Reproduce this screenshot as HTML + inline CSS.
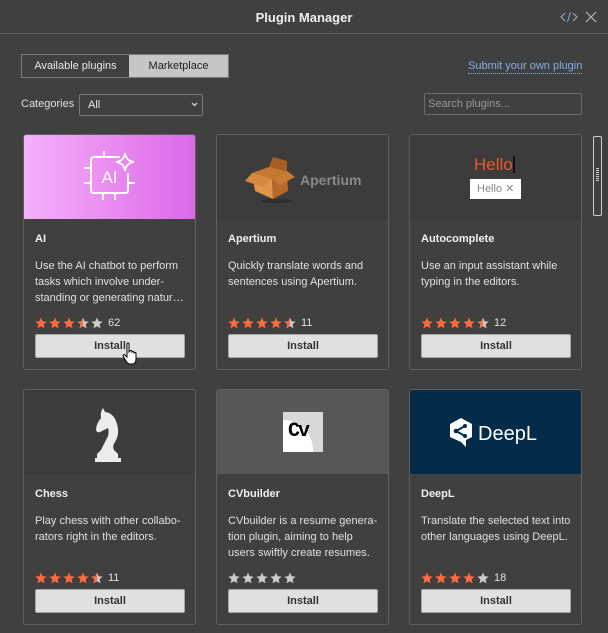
<!DOCTYPE html>
<html><head><meta charset="utf-8"><style>
*{margin:0;padding:0;box-sizing:border-box}
body{width:608px;height:633px;background:#404040;font-family:"Liberation Sans",sans-serif;color:#e6e6e6;position:relative;overflow:hidden;font-size:11px}
.abs{position:absolute}
.title{left:0;top:0;width:608px;height:34px;border-bottom:1px solid #5c5c5c;text-align:center;line-height:36px;font-weight:bold;font-size:13px;color:#f0f0f0}
.card{position:absolute;width:173px;height:236px;border:1px solid #606060;border-radius:3px;overflow:hidden;background:#404040}
.img{position:absolute;left:0;top:0;width:171px;height:84px;background:#3c3c3c}
.name{position:absolute;left:11px;top:98px;font-weight:bold;font-size:11px;color:#f0f0f0}
.desc{position:absolute;left:11px;top:123px;width:160px;line-height:16px;font-size:11px;color:#e0e0e0;white-space:nowrap}
.stars{position:absolute;left:11px;top:181px;height:13px;display:flex;align-items:center}
.stars svg{width:12px;height:12px;margin-right:2px}
.stars span{margin-left:3px;font-size:11px;color:#e0e0e0}
.btn{position:absolute;left:11px;top:199px;width:150px;height:24px;background:#e0e0e0;border:1px solid #a8a8a8;border-radius:2px;text-align:center;line-height:22px;font-weight:bold;font-size:11px;color:#333}
</style></head><body>
<svg width="0" height="0" style="position:absolute"><defs>
<path id="st" d="M6 0.5L7.6 4.3L11.7 4.6L8.6 7.3L9.5 11.3L6 9.2L2.5 11.3L3.4 7.3L0.3 4.6L4.4 4.3Z"/>
<clipPath id="half"><rect x="0" y="0" width="6" height="12"/></clipPath>
</defs></svg>

<div class="abs title">Plugin Manager</div>
<svg class="abs" style="left:560px;top:11px" width="18" height="12" viewBox="0 0 18 12"><path d="M5 2L1 6L5 10M13 2L17 6L13 10" stroke="#a8a8a8" fill="none" stroke-width="1.1"/><path d="M10.5 1L7.5 11" stroke="#7aa0d8" stroke-width="1.1"/></svg>
<svg class="abs" style="left:585px;top:11px" width="12" height="12" viewBox="0 0 12 12"><path d="M1 1L11 11M11 1L1 11" stroke="#b8b8b8" stroke-width="1.2"/></svg>

<div class="abs" style="left:21px;top:54px;width:208px;height:24px;border:1px solid #7a7a7a;"></div>
<div class="abs" style="left:22px;top:55px;width:107px;height:22px;line-height:22px;text-align:center;color:#e8e8e8">Available plugins</div>
<div class="abs" style="left:129px;top:55px;width:99px;height:22px;line-height:22px;text-align:center;background:#c6c6c6;color:#222">Marketplace</div>
<div class="abs" style="left:468px;top:60px;color:#86aee8;border-bottom:1px dotted #86aee8;line-height:13px">Submit your own plugin</div>

<div class="abs" style="left:21px;top:98px;color:#e0e0e0">Categories</div>
<div class="abs" style="left:79px;top:94px;width:124px;height:22px;border:1px solid #777;border-radius:2px;padding-left:8px;line-height:20px;color:#e8e8e8">All</div>
<svg class="abs" style="left:191px;top:102px" width="7" height="5"><path d="M1 1L3.5 3.5L6 1" stroke="#ddd" fill="none" stroke-width="1.2"/></svg>
<div class="abs" style="left:424px;top:93px;width:158px;height:22px;border:1px solid #6c6c6c;border-radius:2px;padding-left:3px;line-height:20px;color:#999">Search plugins...</div>

<div class="abs" style="left:593px;top:136px;width:9px;height:80px;border:1px solid #cfcfcf;border-radius:2px"></div>
<div class="abs" style="left:596px;top:168px;width:3px;height:14px;background:repeating-linear-gradient(#ccc 0 1px,transparent 1px 2px)"></div>

<!-- AI -->
<div class="card" style="left:23px;top:134px">
<div class="img" style="background:linear-gradient(90deg,#f6b0fb,#dc68e8)">
<svg width="171" height="84"><g stroke="#fff" stroke-width="2" fill="none">
<path d="M96 22H70Q67 22 67 25V55Q67 58 70 58H101Q104 58 104 55V38"/>
<path d="M80 22V16M79 58V65M91 58V65M67 33H60M67 48H60M104 48H111"/>
<path d="M101 18Q102 26 110 27Q102 28 101 36Q100 28 92 27Q100 26 101 18Z" stroke-width="1.8"/>
</g><text x="85.5" y="48" text-anchor="middle" fill="#fff" font-size="17" font-family="Liberation Sans">AI</text></svg>
</div>
<div class="name">AI</div>
<div class="desc">Use the AI chatbot to perform<br>tasks which involve under-<br>standing or generating natur…</div>
<div class="stars"><svg><use href="#st" fill="#ff6b3d"/></svg><svg><use href="#st" fill="#ff6b3d"/></svg><svg><use href="#st" fill="#ff6b3d"/></svg><svg><use href="#st" fill="#ccc"/><use href="#st" fill="#ff6b3d" clip-path="url(#half)"/></svg><svg><use href="#st" fill="#ccc"/></svg><span>62</span></div>
<div class="btn">Install</div>
</div>

<!-- Apertium -->
<div class="card" style="left:216px;top:134px">
<div class="img">
<svg width="171" height="84"><path d="M35 38L52 32L70 36L55 44Z" fill="#c4792e"/><path d="M35 38L55 44L56 64L38 56Z" fill="#e0954a"/><path d="M55 44L70 36L71 56L56 64Z" fill="#b8682a"/><path d="M35 38L28 46L46 52L55 44Z" fill="#d6893c"/><path d="M70 36L78 42L63 50L55 44Z" fill="#c97a35"/><path d="M52 32L56 22L70 26L70 36Z" fill="#a85e24"/><ellipse cx="60" cy="66" rx="16" ry="2" fill="#2e2e2e"/>
<text x="83" y="50" fill="#8a8a8a" font-size="14" font-weight="bold" font-family="Liberation Sans">Apertium</text></svg>
</div>
<div class="name">Apertium</div>
<div class="desc">Quickly translate words and<br>sentences using Apertium.</div>
<div class="stars"><svg><use href="#st" fill="#ff6b3d"/></svg><svg><use href="#st" fill="#ff6b3d"/></svg><svg><use href="#st" fill="#ff6b3d"/></svg><svg><use href="#st" fill="#ff6b3d"/></svg><svg><use href="#st" fill="#ccc"/><use href="#st" fill="#ff6b3d" clip-path="url(#half)"/></svg><span>11</span></div>
<div class="btn">Install</div>
</div>

<!-- Autocomplete -->
<div class="card" style="left:409px;top:134px">
<div class="img">
<div class="abs" style="left:64px;top:20px;font-size:17px;color:#f0562c">Hello</div>
<div class="abs" style="left:103px;top:21px;width:2px;height:17px;background:#111"></div>
<div class="abs" style="left:60px;top:44px;width:51px;height:20px;background:#fff;color:#888;font-size:11px;line-height:20px;padding-left:7px">Hello ✕</div>
</div>
<div class="name">Autocomplete</div>
<div class="desc">Use an input assistant while<br>typing in the editors.</div>
<div class="stars"><svg><use href="#st" fill="#ff6b3d"/></svg><svg><use href="#st" fill="#ff6b3d"/></svg><svg><use href="#st" fill="#ff6b3d"/></svg><svg><use href="#st" fill="#ff6b3d"/></svg><svg><use href="#st" fill="#ccc"/><use href="#st" fill="#ff6b3d" clip-path="url(#half)"/></svg><span>12</span></div>
<div class="btn">Install</div>
</div>

<!-- Chess -->
<div class="card" style="left:23px;top:389px">
<div class="img">
<svg width="171" height="84"><path d="M79 18L81 22Q90 23 93 34Q96 44 91 52Q88 56 90 60L94 64L94 68L73 68L73 64L77 60Q79 56 82 50Q86 44 84 38Q80 40 76 42Q73 43 72 40Q72 34 77 28Q76 22 79 18Z" fill="#ececec"/><rect x="71" y="68" width="26" height="4" fill="#ececec"/></svg>
</div>
<div class="name">Chess</div>
<div class="desc">Play chess with other collabo-<br>rators right in the editors.</div>
<div class="stars"><svg><use href="#st" fill="#ff6b3d"/></svg><svg><use href="#st" fill="#ff6b3d"/></svg><svg><use href="#st" fill="#ff6b3d"/></svg><svg><use href="#st" fill="#ff6b3d"/></svg><svg><use href="#st" fill="#ccc"/><use href="#st" fill="#ff6b3d" clip-path="url(#half)"/></svg><span>11</span></div>
<div class="btn">Install</div>
</div>

<!-- CVbuilder -->
<div class="card" style="left:216px;top:389px">
<div class="img" style="background:#575757">
<div class="abs" style="left:66px;top:22px;width:40px;height:40px;background:#d8d8d8;overflow:hidden">
<div class="abs" style="left:-30px;top:8px;width:60px;height:60px;border-radius:50%;background:#fff"></div>
<div class="abs" style="left:5px;top:8px;font-size:20px;font-weight:bold;color:#000;font-family:'Liberation Mono',monospace;letter-spacing:-2px">Cv</div></div>
</div>
<div class="name">CVbuilder</div>
<div class="desc">CVbuilder is a resume genera-<br>tion plugin, aiming to help<br>users swiftly create resumes.</div>
<div class="stars"><svg><use href="#st" fill="#ccc"/></svg><svg><use href="#st" fill="#ccc"/></svg><svg><use href="#st" fill="#ccc"/></svg><svg><use href="#st" fill="#ccc"/></svg><svg><use href="#st" fill="#ccc"/></svg></div>
<div class="btn">Install</div>
</div>

<!-- DeepL -->
<div class="card" style="left:409px;top:389px">
<div class="img" style="background:#042b48">
<svg width="171" height="84"><path d="M51 28L62 34V47L56 50V57L51 52L40 47V34Z" fill="#fff"/><g stroke="#042b48" stroke-width="2"><path d="M46 41L55 36M46 41L55 46"/></g><circle cx="46" cy="41" r="2.3" fill="#042b48"/><circle cx="55" cy="36" r="2" fill="#042b48"/><circle cx="55" cy="46" r="2" fill="#042b48"/>
<text x="68" y="50" fill="#fff" font-size="20" font-family="Liberation Sans">DeepL</text></svg>
</div>
<div class="name">DeepL</div>
<div class="desc">Translate the selected text into<br>other languages using DeepL.</div>
<div class="stars"><svg><use href="#st" fill="#ff6b3d"/></svg><svg><use href="#st" fill="#ff6b3d"/></svg><svg><use href="#st" fill="#ff6b3d"/></svg><svg><use href="#st" fill="#ff6b3d"/></svg><svg><use href="#st" fill="#ccc"/></svg><span>18</span></div>
<div class="btn">Install</div>
</div>

<svg class="abs" style="left:122px;top:342px" width="18" height="24" viewBox="0 0 18 24"><path d="M5 2Q5 1 6 1Q7 1 7 2V10L8 9Q9 8 10 9V10Q11 9 12 10V11Q13 10 14 11V17Q14 21 11 22H8Q6 22 4 19L1 14Q1 12 3 13L5 15Z" fill="#fff" stroke="#000" stroke-width="1"/></svg>
</body></html>
